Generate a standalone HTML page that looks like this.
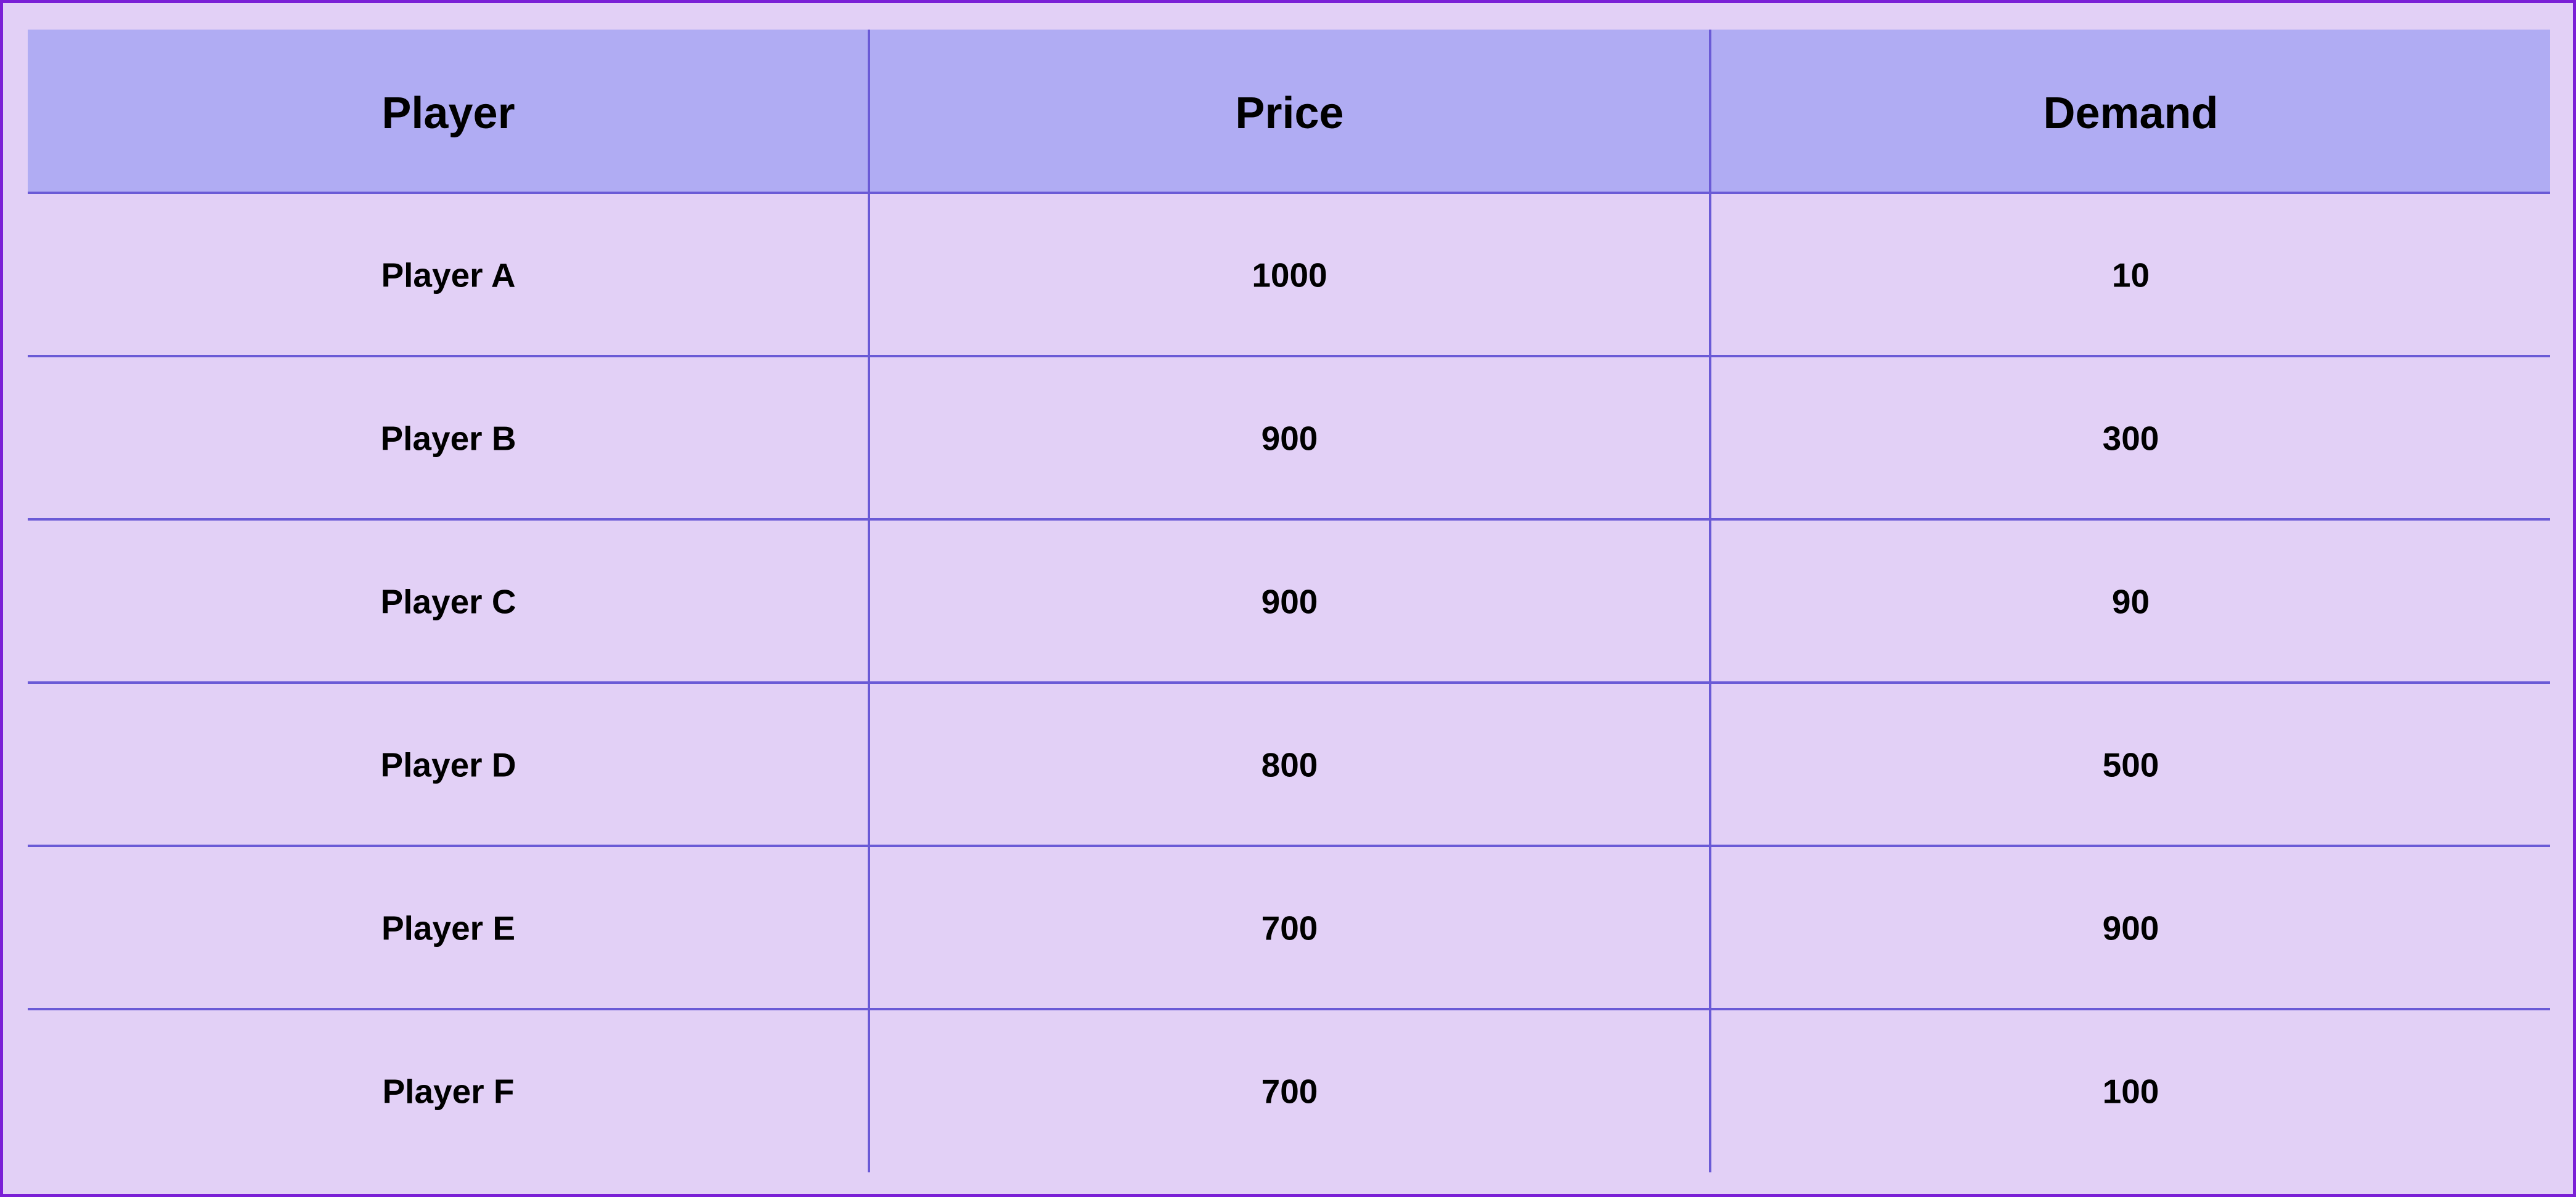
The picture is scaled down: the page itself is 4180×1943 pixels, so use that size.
<!DOCTYPE html>
<html><head><meta charset="utf-8"><style>
html,body{margin:0;padding:0;}
body{width:4180px;height:1943px;position:relative;overflow:hidden;background:#e2d0f6;font-family:"Liberation Sans",Arial,sans-serif;font-weight:bold;color:#000;}
.frame{position:absolute;left:0;top:0;width:4170px;height:1933px;border:5px solid #7a1fd6;}
.hdr{position:absolute;left:45px;top:48px;width:4093px;height:264px;background:#b0acf3;}
.h{position:absolute;left:45px;width:4093px;height:4px;background:#6a5ad6;}
.v{position:absolute;top:48px;width:4px;height:1855px;background:#6a5ad6;}
.t{position:absolute;width:1365px;text-align:center;transform:translateY(-50%);line-height:1;}
.th{font-size:72px;}
.td{font-size:55px;}
</style></head><body>
<div class="frame"></div>
<div class="hdr"></div>
<div class="h" style="top:311px"></div>
<div class="h" style="top:576px"></div>
<div class="h" style="top:841px"></div>
<div class="h" style="top:1106px"></div>
<div class="h" style="top:1371px"></div>
<div class="h" style="top:1636px"></div>
<div class="v" style="left:1408px"></div>
<div class="v" style="left:2773px"></div>

<div class="t th" style="left:45px;top:184px">Player</div>
<div class="t th" style="left:1410px;top:184px">Price</div>
<div class="t th" style="left:2775px;top:184px">Demand</div>

<div class="t td" style="left:45px;top:447px">Player A</div>
<div class="t td" style="left:1410px;top:447px">1000</div>
<div class="t td" style="left:2775px;top:447px">10</div>

<div class="t td" style="left:45px;top:712px">Player B</div>
<div class="t td" style="left:1410px;top:712px">900</div>
<div class="t td" style="left:2775px;top:712px">300</div>

<div class="t td" style="left:45px;top:977px">Player C</div>
<div class="t td" style="left:1410px;top:977px">900</div>
<div class="t td" style="left:2775px;top:977px">90</div>

<div class="t td" style="left:45px;top:1242px">Player D</div>
<div class="t td" style="left:1410px;top:1242px">800</div>
<div class="t td" style="left:2775px;top:1242px">500</div>

<div class="t td" style="left:45px;top:1507px">Player E</div>
<div class="t td" style="left:1410px;top:1507px">700</div>
<div class="t td" style="left:2775px;top:1507px">900</div>

<div class="t td" style="left:45px;top:1772px">Player F</div>
<div class="t td" style="left:1410px;top:1772px">700</div>
<div class="t td" style="left:2775px;top:1772px">100</div>
</body></html>
